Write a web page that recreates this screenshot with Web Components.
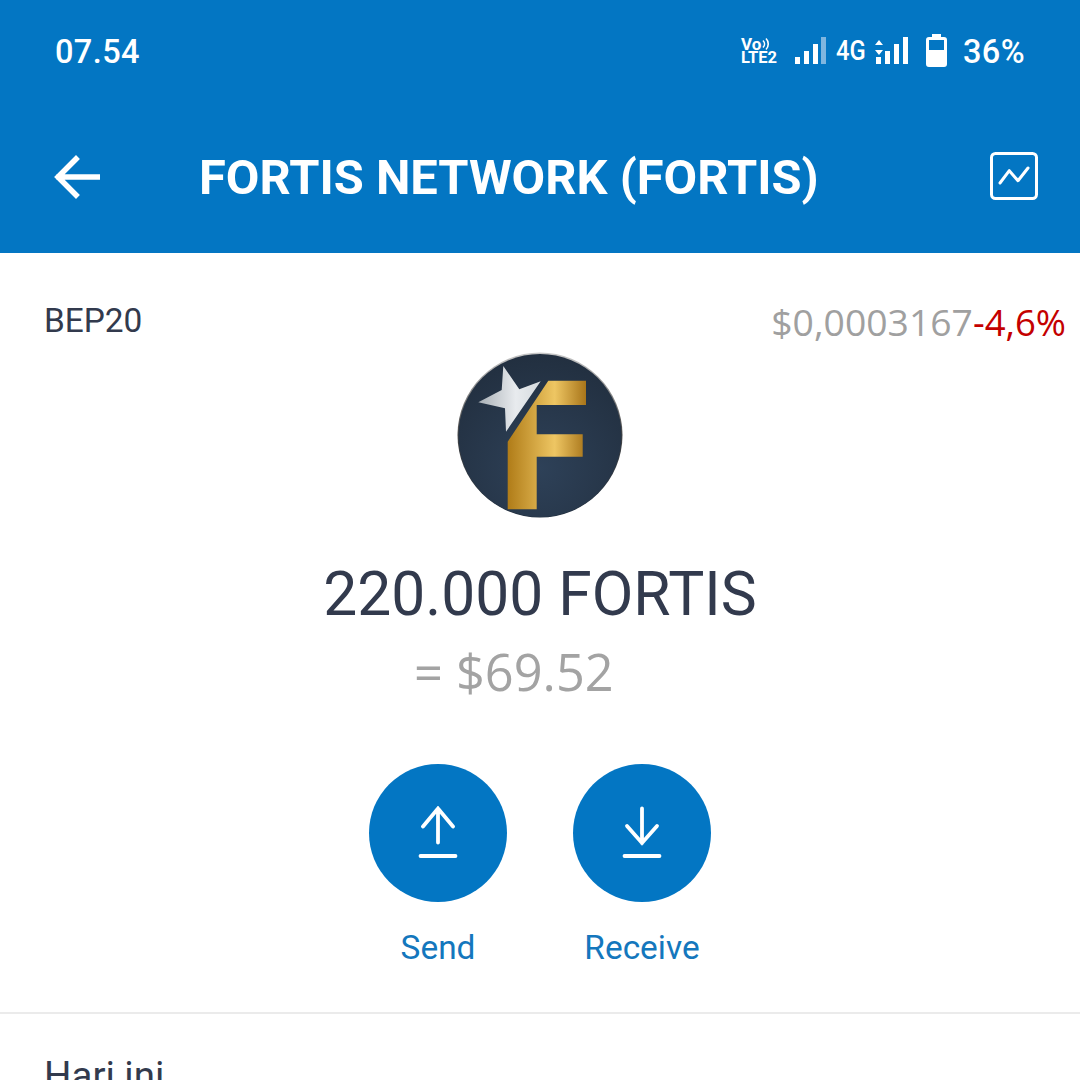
<!DOCTYPE html>
<html><head><meta charset="utf-8">
<style>
html,body{margin:0;padding:0;background:#fff}
body{width:1080px;height:1080px;overflow:hidden;font-family:Roboto,sans-serif}
</style></head>
<body>
<x-status-bar></x-status-bar>
<x-app-bar>FORTIS NETWORK (FORTIS)</x-app-bar>
<x-token-summary>
  <x-action-button slot="actions" kind="send">Send</x-action-button>
  <x-action-button slot="actions" kind="receive">Receive</x-action-button>
</x-token-summary>
<x-history-section>Hari ini</x-history-section>
<script>
function def(name, html, setup){
  customElements.define(name, class extends HTMLElement{
    constructor(){super();this.attachShadow({mode:'open'}).innerHTML=html;}
    connectedCallback(){ if(setup) setup(this); }
  });
}
def('x-status-bar',`<style>
:host{display:flex;align-items:center;justify-content:space-between;height:103px;background:#0376c3;color:#fff;padding:0 55px 2px 55px;box-sizing:border-box;font-family:Roboto,sans-serif}
.t{font-size:32.500px;font-weight:500;letter-spacing:.4px;position:relative;top:1px}
.r{display:flex;align-items:center}
svg{display:block}
.net{font-size:27px;font-weight:500;transform:scaleX(.88);width:32px;text-align:center;margin:0 0 0 8px}
.pct{font-size:32.500px;font-weight:500;letter-spacing:.4px;margin-left:16px;position:relative;top:1px}
.v{display:flex;flex-direction:column;font-weight:700;line-height:14px;font-size:16.500px;width:38px;margin-right:16px}
.v span{display:flex;align-items:center}
.v span:first-child{font-size:17px;gap:1px}
</style>
<span class="t">07.54</span>
<div class="r">
 <div class="v"><span>Vo<svg width="8" height="14" viewBox="0 0 8 14" fill="none" stroke="#fff" stroke-width="1.6"><path d="M1 3.500c2 2 2 5 0 7M4 1.500c3 3 3 8 0 11"/></svg></span><span>LTE2</span></div>
 <svg width="31" height="30" viewBox="0 0 31 30" fill="#fff"><rect x="0" y="21" width="5" height="7"/><rect x="9" y="15" width="5" height="13"/><rect x="18" y="8" width="5" height="20"/><rect x="26" y="1" width="5" height="27" fill="#7fb6e0"/></svg>
 <span class="net">4G</span>
 <svg style="margin-left:9px" width="33" height="30" viewBox="0 0 33 30" fill="#fff"><path d="M4 4l4 5H0zM4 19l4-5H0z"/><rect x="1" y="21" width="5" height="7"/><rect x="10" y="15" width="5" height="13"/><rect x="19" y="8" width="5" height="20"/><rect x="28" y="1" width="5" height="27"/></svg>
 <svg style="margin-left:18px" width="21" height="33" viewBox="0 0 21 33"><path fill="#fff" d="M6 0h9v3h3a3 3 0 0 1 3 3v24a3 3 0 0 1-3 3H3a3 3 0 0 1-3-3V6a3 3 0 0 1 3-3h3z"/><path fill="#0376c3" d="M3 6h15v10H3z"/></svg>
 <span class="pct">36%</span>
</div>`);
def('x-app-bar',`<style>
:host{display:flex;align-items:center;height:150px;background:#0376c3;color:#fff;box-sizing:border-box;padding:0 42px 0 54px;font-family:Roboto,sans-serif}
.title{flex:1;font-size:48.800px;font-weight:700;margin-left:99px;white-space:nowrap;line-height:1;margin-top:1px}
svg{display:block}
.arrow{margin-top:-2px}
.chart{margin-top:-4px}
</style>
<svg class="arrow" width="46" height="44" viewBox="0 0 46 44" fill="none" stroke="#fff" stroke-width="5.500" stroke-linecap="square" stroke-linejoin="miter"><path d="M44 22H5M22 4L4 22l18 18"/></svg>
<div class="title"><slot></slot></div>
<svg class="chart" width="48" height="48" viewBox="0 0 48 48" fill="none" stroke="#fff"><rect x="1.500" y="1.500" width="45" height="45" rx="4" stroke-width="3"/><path d="M10 31l9.300-12.300 8.700 10L38 16" stroke-width="3" stroke-linecap="round" stroke-linejoin="round"/></svg>`);
def('x-token-summary',`<style>
:host{display:block;height:761px;box-sizing:border-box;border-bottom:2px solid #ebebeb;background:#fff;font-family:Roboto,sans-serif}
.top{display:flex;justify-content:space-between;align-items:flex-start;padding:49px 14px 0 44px;height:99px;box-sizing:border-box}
.net{font-size:33.400px;color:#323a4d;line-height:38px}
.price{font-family:"Open Sans",Roboto,sans-serif;font-size:37.300px;color:#a0a0a0;line-height:44px;margin-top:-2px;white-space:nowrap}
.price b{font-weight:400;color:#c40000;font-size:36.500px}
.logo{display:block;margin:0 auto;width:166px;height:166px}
.amt{text-align:center;font-size:60.500px;color:#323a4d;line-height:70px;margin-top:42px}
.fiat{font-size:50.500px;font-weight:400;color:#a3a3a3;line-height:60px;margin-top:12px;padding-left:414px;font-family:"Open Sans",Roboto,sans-serif;white-space:nowrap}
.acts{display:flex;justify-content:center;gap:66px;margin-top:62px}
</style>
<div class="top"><span class="net">BEP20</span><span class="price">$0,0003167<b>-4,6%</b></span></div>
<svg class="logo" viewBox="457 352 166 166">
<defs>
<linearGradient id="g" x1="0" y1="0" x2="1" y2="0"><stop offset="0" stop-color="#b07c18"/><stop offset=".6" stop-color="#eec663"/><stop offset="1" stop-color="#a8751a"/></linearGradient>
<linearGradient id="s" x1="0" y1="0" x2="1" y2="0"><stop offset="0" stop-color="#a9b0b6"/><stop offset=".6" stop-color="#e8ebee"/><stop offset="1" stop-color="#d5dade"/></linearGradient>
<radialGradient id="b" cx=".5" cy=".7" r=".75"><stop offset="0" stop-color="#2e4158"/><stop offset="1" stop-color="#212e3e"/></radialGradient>
<linearGradient id="rim" x1="0" y1="0" x2="0" y2="1"><stop offset="0" stop-color="#c8c8c8"/><stop offset=".5" stop-color="#444"/><stop offset="1" stop-color="#1f2c3b"/></linearGradient>
</defs>
<circle cx="540" cy="435" r="82.500" fill="url(#rim)"/>
<circle cx="540" cy="435.500" r="81.500" fill="url(#b)"/>
<path fill="url(#g)" d="M548.300 380.700H586V405H536.700V434.300H582.700V456.700H536.700V509.300H507.700V441.700z"/>
<path fill="url(#s)" d="M503.300 366L519.300 389.300 540.700 381.300 506 431.700 505 408.300 478.300 402.300 501.700 390z"/>
</svg>
<div class="amt">220.000 FORTIS</div>
<div class="fiat">= $69.52</div>
<div class="acts"><slot name="actions"></slot></div>`);
def('x-action-button',`<style>
:host{display:flex;flex-direction:column;align-items:center;width:138px;font-family:Roboto,sans-serif}
.c{width:138px;height:138px;border-radius:50%;background:#0376c3;display:flex;align-items:center;justify-content:center}
.l{font-size:33.400px;color:#1477bd;line-height:38px;margin-top:27px;white-space:nowrap}
svg{display:block}
</style>
<div class="c"><svg width="40" height="54" viewBox="0 0 40 54" fill="none" stroke="#fff" stroke-width="3.800" stroke-linecap="round" stroke-linejoin="miter"></svg></div>
<div class="l"><slot></slot></div>`, el=>{
  const up='<path d="M20 36.500V2.500M5 20.500L20 2.500l15 18"/><path d="M2.500 50h35"/>';
  const dn='<path d="M20 2.500V37M5 20l15 17 15-17"/><path d="M2.500 50h35"/>';
  el.shadowRoot.querySelector('svg').innerHTML=el.getAttribute('kind')==='send'?up:dn;
});
def('x-history-section',`<style>
:host{display:block;padding:43px 0 0 44px;font-size:38.500px;color:#323a4d;line-height:38px;font-family:Roboto,sans-serif}
</style><slot></slot>`);
</script>
</body></html>
